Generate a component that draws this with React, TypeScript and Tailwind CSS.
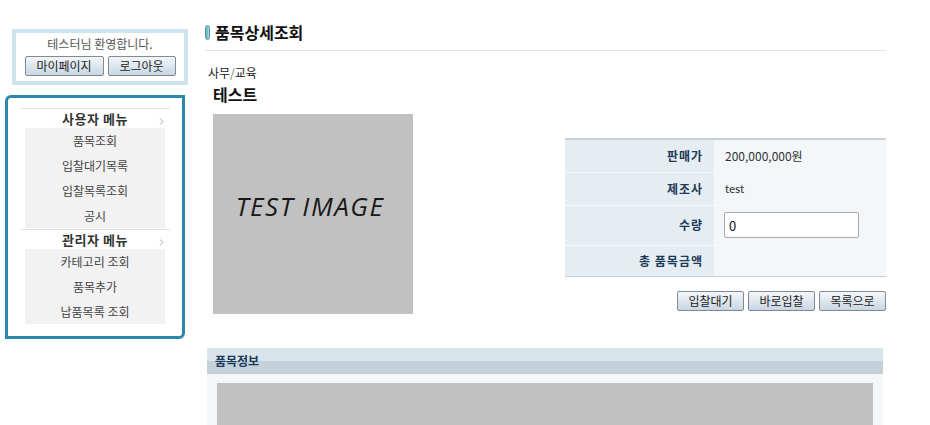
import React from 'react';
import { ChevronRight } from 'lucide-react';

const FONT = { fontFamily: '"Noto Sans CJK KR", "Noto Sans", sans-serif' };

const userMenu = ['품목조회', '입찰대기목록', '입찰목록조회', '공시'];
const adminMenu = ['카테고리 조회', '품목추가', '납품목록 조회'];

function GrayButton({ label, className }: { label: string; className?: string }) {
    return (
        <button
            type="button"
            className={`h-[20px] border border-[#7d8b99] rounded-[2px] bg-gradient-to-b from-[#f4f7fa] to-[#c9d6e2] text-[12px] leading-[18px] text-[#222] ${className ?? ''}`}
        >
            {label}
        </button>
    );
}

function MenuSection({ title, items }: { title: string; items: string[] }) {
    return (
        <div>
            <div className="relative h-[20px] border-t border-[#e3e3e3] flex items-center justify-center">
                <span className="text-[13px] font-bold text-[#333] leading-[20px] tracking-[0.5px]">{title}</span>
                <ChevronRight size={11} strokeWidth={2.5} className="absolute right-[3px] top-[7px] text-[#cfcfcf]" />
            </div>
            <ul className="mx-[5px] bg-[#f2f2f2]">
                {items.map((item) => (
                    <li key={item} className="h-[25px] flex items-center justify-center text-[12px] text-[#444]">
                        {item}
                    </li>
                ))}
            </ul>
        </div>
    );
}

export default function App() {
    return (
        <div className="flex w-[930px] h-[425px] overflow-hidden bg-white" style={FONT}>
            <aside className="w-[205px] shrink-0">
                <div className="ml-[12px] mt-[29px] w-[176px] h-[56px] border-4 border-[#cde4ee] flex flex-col items-center">
                    <div className="mt-[3px] text-[12px] leading-[16px] text-[#555]">테스터님 환영합니다.</div>
                    <div className="flex gap-[4px] mt-[4px]">
                        <GrayButton label="마이페이지" className="w-[79px]" />
                        <GrayButton label="로그아웃" className="w-[68px]" />
                    </div>
                </div>

                <div className="ml-[5px] mt-[10px] w-[180px] h-[244px] border-[3px] border-[#2a87ad] rounded-tl-[6px] rounded-br-[6px] pt-[10px] px-[12px]">
                    <MenuSection title="사용자 메뉴" items={userMenu} />
                    <div className="mt-[1px]">
                        <MenuSection title="관리자 메뉴" items={adminMenu} />
                    </div>
                </div>
            </aside>

            <main className="w-[681px] shrink-0">
                <div className="mt-[22px] h-[29px] flex items-start border-b border-[#e3e3e3]">
                    <span className="mt-[3px] w-[5px] h-[15px] rounded-[3px] bg-gradient-to-r from-[#5aa9bc] to-[#a9dbe6] border border-[#5a97a8]" />
                    <h2 className="ml-[5px] text-[16px] font-bold leading-[20px] text-[#111]">품목상세조회</h2>
                </div>

                <div className="mt-[14px] ml-[3px] text-[12px] leading-[16px] text-[#222]">
                    사무<span className="text-[#777]">/</span>교육
                </div>
                <div className="mt-[3px] ml-[8px] text-[16px] font-bold leading-[20px] text-[#111]">테스트</div>

                <div className="mt-[10px] flex justify-between">
                    <div className="ml-[8px] w-[200px] h-[200px] bg-[#c1c1c1] flex items-center justify-center pb-[16px] pr-[6px]">
                        <span
                            className="italic text-[26px] text-[#1a1a1a] tracking-[1.5px]"
                            style={{ fontFamily: '"Open Sans", sans-serif' }}
                        >
                            TEST IMAGE
                        </span>
                    </div>

                    <div className="mt-[24px] w-[321px]">
                        <table className="w-full border-collapse border-t-2 border-b border-[#c5d2dc] text-[12px]">
                            <tbody>
                                <tr className="h-[33px] border-b border-[#f6f8fa]">
                                    <th className="w-[149px] bg-[#e5ecf2] text-right pr-[11px] font-bold text-[#1c3a57] tracking-[1px]">판매가</th>
                                    <td className="bg-[#f3f7fa] pl-[11px] text-[#333]">200,000,000원</td>
                                </tr>
                                <tr className="h-[33px] border-b border-[#f6f8fa]">
                                    <th className="bg-[#e5ecf2] text-right pr-[11px] font-bold text-[#1c3a57] tracking-[1px]">제조사</th>
                                    <td className="bg-[#f3f7fa] pl-[11px] text-[11px] text-[#333]">test</td>
                                </tr>
                                <tr className="h-[40px] border-b border-[#f6f8fa]">
                                    <th className="bg-[#e5ecf2] text-right pr-[11px] font-bold text-[#1c3a57] tracking-[1px]">수량</th>
                                    <td className="bg-[#f3f7fa] pl-[10px]">
                                        <input
                                            defaultValue="0"
                                            className="w-[135px] h-[26px] border border-[#a9a9a9] rounded-[2px] bg-white px-[4px] text-[13px] text-[#111] outline-none"
                                        />
                                    </td>
                                </tr>
                                <tr className="h-[31px]">
                                    <th className="bg-[#e5ecf2] text-right pr-[11px] font-bold text-[#1c3a57] tracking-[1px]">총 품목금액</th>
                                    <td className="bg-[#f3f7fa]" />
                                </tr>
                            </tbody>
                        </table>
                        <div className="mt-[14px] flex justify-end gap-[4px]">
                            <GrayButton label="입찰대기" className="w-[67px]" />
                            <GrayButton label="바로입찰" className="w-[67px]" />
                            <GrayButton label="목록으로" className="w-[67px]" />
                        </div>
                    </div>
                </div>

                <section className="mt-[34px] ml-[2px] w-[676px]">
                    <div className="h-[26px] bg-gradient-to-b from-[#d9e4eb] from-50% to-[#c3d1db] to-50% pl-[8px] flex items-center">
                        <span className="text-[12px] font-bold text-[#1a3a5a]">품목정보</span>
                    </div>
                    <div className="bg-[#f4f7fa] px-[10px] pt-[9px] h-[100px]">
                        <div className="h-[100px] bg-[#c1c1c1]" />
                    </div>
                </section>
            </main>
        </div>
    );
}
